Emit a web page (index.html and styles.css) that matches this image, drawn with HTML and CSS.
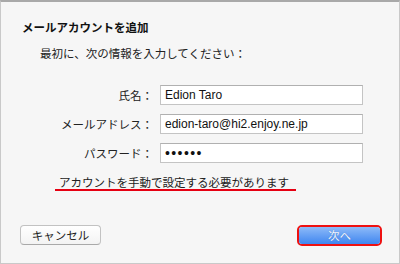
FILE: index.html
```html
<!DOCTYPE html>
<html lang="ja">
<head>
    <meta charset="UTF-8">
    <meta name="viewport" content="width=device-width, initial-scale=1.0">
    <title>メールアカウントを追加</title>
    <link rel="stylesheet" href="styles.css">
</head>
<body>
    <div class="dialog">
        <h1 class="title">メールアカウントを追加</h1>
        <p class="lead">最初に、次の情報を入力してください：</p>

        <div class="form">
            <label class="label" for="name">氏名：</label>
            <input class="field" type="text" id="name" value="Edion Taro">
            <label class="label" for="mail">メールアドレス：</label>
            <input class="field" type="text" id="mail" value="edion-taro@hi2.enjoy.ne.jp">
            <label class="label" for="pass">パスワード：</label>
            <input class="field pass" type="password" id="pass" value="123456">
        </div>

        <div class="notice"><span class="notice-text">アカウントを手動で設定する必要があります</span></div>

        <div class="footer">
            <button class="btn">キャンセル</button>
            <span class="ring"><button class="btn primary">次へ</button></span>
        </div>
    </div>
</body>
</html>
```

FILE: styles.css
```css
body {
    margin: 0;
    font-family: "Noto Sans CJK JP", "Liberation Sans", sans-serif;
    color: #222;
    background: #f6f6f6;
}
.dialog {
    width: 400px;
    height: 264px;
    box-sizing: border-box;
    background: #f6f6f6;
    border: 1px solid #c9c9c9;
    border-top: 2px solid #a9a9a9;
    padding-top: 17px;
}
.title {
    margin: 0 0 0 21px;
    font-size: 11.5px;
    line-height: 16px;
    font-weight: bold;
    color: #111;
}
.lead {
    margin: 10px 0 0 39px;
    font-size: 11.5px;
    line-height: 16px;
}
.form {
    display: grid;
    grid-template-columns: 152px 203px;
    column-gap: 7px;
    row-gap: 9px;
    margin-top: 24px;
}
.label {
    text-align: right;
    font-size: 11.5px;
    line-height: 20px;
    white-space: nowrap;
}
.field {
    width: 203px;
    height: 20px;
    box-sizing: border-box;
    margin: 0;
    padding: 0 4px;
    border: 1px solid #c4c4c4;
    border-top-color: #b0b0b0;
    background: #fff;
    font-family: "Liberation Sans", sans-serif;
    font-size: 12px;
    color: #111;
    outline: none;
}
.pass {
    font-size: 14px;
    letter-spacing: 1.4px;
}
.notice {
    display: flex;
    margin: 12px 0 0 54px;
}
.notice-text {
    padding: 0 7px 0 4px;
    font-size: 11.5px;
    line-height: 14px;
    border-bottom: 2px solid #e60012;
}
.footer {
    display: flex;
    justify-content: space-between;
    align-items: flex-start;
    margin-top: 34px;
    padding: 0 17px 0 19px;
}
.btn {
    width: 81px;
    height: 20px;
    margin: 0;
    padding: 0;
    font-family: "Noto Sans CJK JP", sans-serif;
    font-size: 11.5px;
    line-height: 18px;
    color: #222;
    background: linear-gradient(#ffffff, #f3f3f3);
    border: 1px solid #c2c2c2;
    border-bottom-color: #a9a9a9;
    border-radius: 4px;
}
.ring {
    display: block;
    border: 2px solid #ee1111;
    border-radius: 5px;
    line-height: 0;
}
.primary {
    height: 17px;
    line-height: 17px;
    border: none;
    border-radius: 3px;
    color: #f4f8ff;
    background: linear-gradient(#8dbaf8, #3f86f0);
    text-shadow: 0 0 1px rgba(0, 40, 120, 0.4);
}
```
